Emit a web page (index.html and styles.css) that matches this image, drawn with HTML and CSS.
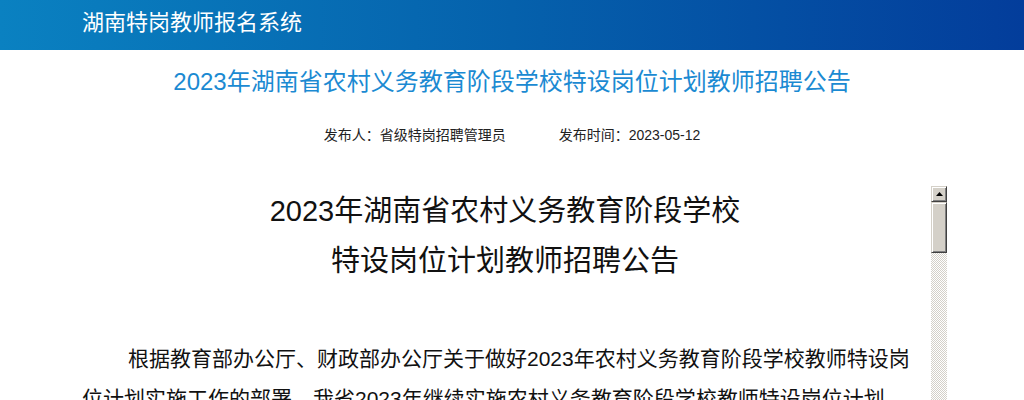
FILE: index.html
```html
<!DOCTYPE html>
<html lang="zh-CN">
<head>
<meta charset="utf-8">
<title>湖南特岗教师报名系统</title>
<link rel="stylesheet" href="styles.css">
</head>
<body>
<header class="topbar">
  <div class="brand">湖南特岗教师报名系统</div>
</header>
<main class="notice">
  <h1 class="notice-title">2023年湖南省农村义务教育阶段学校特设岗位计划教师招聘公告</h1>
  <div class="meta">
    <span class="meta-item">发布人：省级特岗招聘管理员</span>
    <span class="meta-item">发布时间：2023-05-12</span>
  </div>
  <div class="doc-frame">
    <div class="doc">
      <h2 class="doc-title">2023年湖南省农村义务教育阶段学校<br>特设岗位计划教师招聘公告</h2>
      <p class="para">根据教育部办公厅、财政部办公厅关于做好2023年农村义务教育阶段学校教师特设岗位计划实施工作的部署，我省2023年继续实施农村义务教育阶段学校教师特设岗位计划，现将有关事项公告如下。</p>
      <p class="para">一、招聘计划</p>
      <p class="para">2023年我省计划招聘农村义务教育阶段学校特岗教师，招聘岗位主要分布在乡镇及以下农村学校，具体设岗县市区、学校、学科及人数以省级特岗招聘管理平台公布的岗位计划为准。</p>
      <p class="para">二、招聘对象和条件</p>
      <p class="para">（一）招聘对象。全日制普通高校本科及以上学历的应届毕业生和往届毕业生；全日制普通高校师范类专业专科学历的应届毕业生和往届毕业生，可报考村小、教学点岗位。</p>
    </div>
    <div class="vscroll" aria-hidden="true">
      <div class="sb-btn">
        <svg class="sb-arrow" width="7" height="4" viewBox="0 0 7 4"><polygon points="3.5,0 7,4 0,4" fill="#000"/></svg>
      </div>
      <div class="sb-thumb"></div>
      <div class="sb-track"></div>
    </div>
  </div>
</main>
</body>
</html>
```

FILE: styles.css
```css
html, body {
  margin: 0;
  padding: 0;
  overflow: hidden;
  background: #fff;
}

body {
  font-family: "Liberation Sans", "Noto Sans CJK SC", sans-serif;
  color: #111;
}

.topbar {
  height: 50px;
  background: linear-gradient(to right, #0a81c1, #0561ac 50%, #033d9b);
}

.brand {
  padding-left: 82px;
  font-size: 22px;
  line-height: 46px;
  color: #fff;
}

.notice-title {
  margin: 12px 0 0;
  font-size: 24px;
  font-weight: normal;
  line-height: 40px;
  text-align: center;
  color: #1b8ad2;
}

.meta {
  margin-top: 23px;
  display: flex;
  justify-content: center;
  gap: 53px;
  font-size: 14px;
  line-height: 20px;
  color: #222;
}

.doc-frame {
  display: flex;
  margin: 41px 0 0 82px;
  height: 400px;
}

.doc {
  width: 843px;
  padding-right: 6px;
  overflow: hidden;
}

.doc-title {
  margin: 0 0 0 3px;
  font-size: 29px;
  font-weight: normal;
  line-height: 50px;
  text-align: center;
  color: #111;
}

.para {
  margin: 0;
  font-size: 21px;
  line-height: 40px;
  text-indent: 46px;
}

.doc-title + .para {
  margin-top: 53px;
}

.vscroll {
  width: 16px;
  display: flex;
  flex-direction: column;
  background: repeating-conic-gradient(#d4d0c8 0 25%, #ffffff 0 50%) 0 0 / 2px 2px;
}

.sb-btn,
.sb-thumb {
  box-sizing: border-box;
  background: #d4d0c8;
  border: 1px solid;
  border-color: #d4d0c8 #404040 #404040 #d4d0c8;
  box-shadow: inset 1px 1px #ffffff, inset -1px -1px #808080;
}

.sb-btn {
  height: 16px;
  display: flex;
  align-items: center;
  justify-content: center;
}

.sb-arrow {
  display: block;
  margin-top: -1px;
}

.sb-thumb {
  height: 51px;
}

.sb-track {
  flex: 1;
}
```
